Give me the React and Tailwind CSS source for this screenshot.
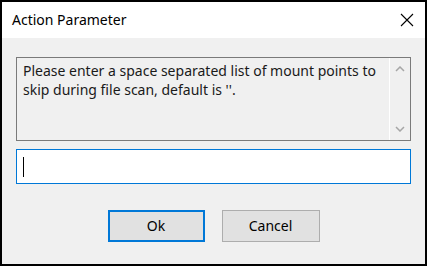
export default function App() {
  return (
    <div className="w-[427px] h-[266px] border-2 border-black bg-[#f0f0f0] flex flex-col font-['Noto_Sans',sans-serif] text-black">
      <div className="h-[36px] bg-white flex items-center justify-between pl-[10px] pr-[12px] shrink-0">
        <span className="text-[14px] leading-none">Action Parameter</span>
        <svg width="14" height="14" viewBox="0 0 14 14" className="-mr-[1px]">
          <path d="M1 1 L13 13 M13 1 L1 13" stroke="#000" strokeWidth="1.1" fill="none" />
        </svg>
      </div>
      <div className="flex flex-col px-[14px] pt-[19px]">
        <div className="h-[84px] border border-[#7a7a7a] flex">
          <p className="flex-1 pl-[6px] pt-[3px] pr-2 text-[14px] leading-[19px] text-[#1a1a1a]">
            Please enter a space separated list of mount points to skip during file scan, default is ''.
          </p>
          <div className="w-[21px] border-l border-white flex flex-col items-center justify-between py-[8px]">
            <svg width="10" height="6" viewBox="0 0 10 6">
              <path d="M1 5 L5 1 L9 5" stroke="#a6a6a6" strokeWidth="1.5" fill="none" />
            </svg>
            <svg width="10" height="6" viewBox="0 0 10 6">
              <path d="M1 1 L5 5 L9 1" stroke="#a6a6a6" strokeWidth="1.5" fill="none" />
            </svg>
          </div>
        </div>
        <div className="mt-[8px] h-[35px] border border-[#0078d7] bg-white flex items-center pl-[6px]">
          <div className="w-px h-[20px] bg-black" />
        </div>
        <div className="mt-[26px] flex justify-center gap-[17px]">
          <button className="w-[97px] h-[32px] border-2 border-[#0078d7] bg-[#e1e1e1] text-[14px] leading-none">
            Ok
          </button>
          <button className="w-[98px] h-[32px] border border-[#adadad] bg-[#e1e1e1] text-[14px] leading-none">
            Cancel
          </button>
        </div>
      </div>
    </div>
  );
}
